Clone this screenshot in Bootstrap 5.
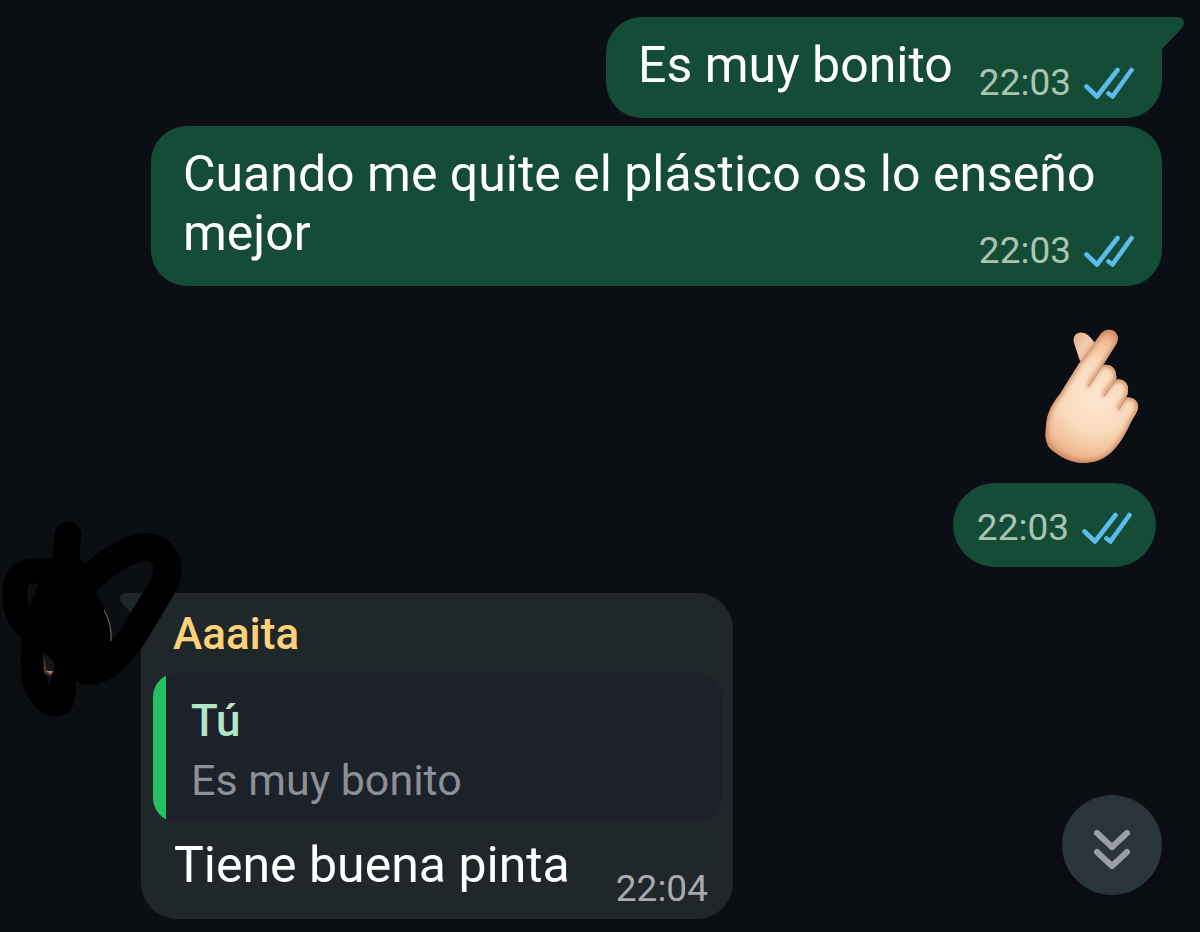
<!DOCTYPE html>
<html lang="es" data-bs-theme="dark">
<head>
<meta charset="utf-8">
<meta name="viewport" content="width=device-width, initial-scale=1">
<title>Chat</title>
<link rel="stylesheet" href="https://cdn.jsdelivr.net/npm/bootstrap@5.3.0/dist/css/bootstrap.min.css">
<style>
body { background: #0b0f13; font-family: Roboto, "Noto Sans", sans-serif; color: #fff; }
.chat { padding: 17px 38px 13px 0; }
.bubble { border-radius: 36px; font-size: 50px; line-height: 59px; }
.bubble-out { background: #154c37; padding: 19px 28px 12px 32px; margin-left: 151px; }
.bubble-in { background: #20272a; padding: 15px 11px 7px 12px; }
.bubble-text { padding-bottom: 11px; }
.meta { font-size: 37px; line-height: 46px; color: #a9c4b3; gap: 13px; }
.meta-gap { gap: 26px; }
.stacked > * { grid-area: 1 / 1; }
.only-meta { padding: 22px 24px 16px; margin-right: 6px; border-radius: 42px; }
.ticks { width: 50px; height: 34px; }
.tail { position: absolute; top: 0; }
.tail-out { left: calc(100% - 40px); }
.tail-in { right: calc(100% - 40px); }
.emoji { width: 104px; height: 142px; margin: 39px 18px 16px 0; }
.incoming { margin-top: 26px; }
.avatar-col { width: 141px; }
.scribble { position: absolute; left: 0; top: -78px; pointer-events: none; z-index: 2; }
.sender { font-size: 44px; line-height: 52px; color: #ffd279; padding-left: 20px; margin-bottom: 13px; }
.sender, .quote-name { font-weight: 500; }
.quote { background: #1d222a; border-radius: 24px; overflow: hidden; color: #8d9094; font-size: 43px; line-height: 51px; }
.quote-bar { width: 13px; background: #25c063; }
.quote-body { padding: 22px 25px 16px; }
.quote-name { font-size: 44px; line-height: 52px; color: #b1e6c9; margin-bottom: 8px; }
.reply { padding: 14px 14px 0 21px; gap: 46px; }
.reply .bubble-text { padding-bottom: 17px; }
.reply .meta { color: #a8aaab; }
.jump { width: 100px; height: 100px; right: 38px; bottom: 37px; background: #29343c; box-shadow: 0 2px 6px #0006; }
</style>
</head>
<body>
<svg class="d-none" aria-hidden="true">
  <symbol id="ticks" viewBox="0 0 50 34">
    <g fill="none" stroke="#5bbcf0" stroke-width="4.6" stroke-linecap="round" stroke-linejoin="round">
      <path d="M2.5 20.5L13 30.500L33.500 4"/><path d="M24.500 27.500L28.500 30.500L47.500 4"/>
    </g>
  </symbol>
</svg>

<main class="chat d-flex flex-column">
  <div class="bubble bubble-out meta-gap position-relative align-self-end d-flex align-items-end">
    <svg class="tail tail-out" width="64" height="60" aria-hidden="true"><path fill="#154c37" d="M0 0H56Q62 0 62 6Q62 8 60 11L40 32V42L0 36Z"/></svg>
    <div class="bubble-text position-relative">Es muy bonito</div>
    <div class="meta d-flex align-items-center position-relative"><time>22:03</time><svg class="ticks" role="img" aria-label="Leído"><use href="#ticks"/></svg></div>
  </div>

  <div class="bubble bubble-out stacked align-self-end d-grid mt-2">
    <div class="bubble-text">Cuando me quite el plástico os lo enseño mejor</div>
    <div class="meta d-flex align-items-center align-self-end ms-auto"><time>22:03</time><svg class="ticks" role="img" aria-label="Leído"><use href="#ticks"/></svg></div>
  </div>

  <svg class="emoji align-self-end" viewBox="1040 325 104 142" role="img" aria-label="Corazón con los dedos">
    <defs>
      <radialGradient id="palm" gradientUnits="userSpaceOnUse" cx="1096" cy="398" r="72"><stop offset="0" stop-color="#fde7d0"/><stop offset=".5" stop-color="#f9d9bc"/><stop offset=".8" stop-color="#efbc94"/><stop offset="1" stop-color="#d99367"/></radialGradient>
      <linearGradient id="thumb" x1="0" y1="0" x2="1" y2="1"><stop offset="0" stop-color="#e3aa88"/><stop offset=".5" stop-color="#f3cdb1"/><stop offset="1" stop-color="#d29672"/></linearGradient>
      <filter id="soft" x="-20%" y="-20%" width="140%" height="140%"><feGaussianBlur stdDeviation="2"/></filter>
      <clipPath id="hand"><path d="M1080 362L1100 335C1104 329 1112 328 1116 333C1119 337 1118 342 1115 346L1103 365C1109 364 1116 367 1116 375C1117 378 1116 379 1116 380C1123 378 1129 383 1128 391C1128 393 1127 396 1126 398C1132 396 1139 401 1138 408C1137 413 1133 418 1130 424C1122 441 1111 459 1092 462C1077 465 1065 460 1053 451C1045 445 1045 436 1046 427C1047 411 1053 403 1060 394Z"/></clipPath>
    </defs>
    <path fill="url(#thumb)" d="M1080 361L1074 343C1072 335 1078 331 1084 333C1088 334 1092 339 1095 343L1089 356Z"/>
    <g clip-path="url(#hand)">
      <path fill="url(#palm)" d="M1040 325H1144V467H1040Z"/>
      <g fill="none" stroke="#c9825b" filter="url(#soft)">
        <path stroke-width="4" d="M1080 362L1100 335C1104 329 1112 328 1116 333C1119 337 1118 342 1115 346L1103 365C1109 364 1116 367 1116 375C1117 378 1116 379 1116 380C1123 378 1129 383 1128 391C1128 393 1127 396 1126 398C1132 396 1139 401 1138 408C1137 413 1133 418 1130 424C1122 441 1111 459 1092 462C1077 465 1065 460 1053 451C1045 445 1045 436 1046 427C1047 411 1053 403 1060 394Z"/>
        <path stroke-width="3" d="M1104 364Q1094 373 1088 387M1116 379Q1109 385 1103 396M1126 397Q1121 402 1118 410"/>
      </g>
      <path fill="none" stroke="#c98a66" stroke-width="1" stroke-linecap="round" d="M1103 365L1088 387M1116 380L1104 396M1126 398L1119 409"/>
    </g>
  </svg>

  <div class="bubble bubble-out only-meta align-self-end">
    <div class="meta d-flex align-items-center"><time>22:03</time><svg class="ticks" role="img" aria-label="Leído"><use href="#ticks"/></svg></div>
  </div>

  <div class="incoming d-flex align-items-start">
    <div class="avatar-col flex-shrink-0 position-relative align-self-start">
      <svg class="scribble" width="190" height="210" viewBox="0 515 190 210" role="img" aria-label="Avatar tachado">
        <g fill="none" stroke="#000" stroke-linecap="round" stroke-linejoin="round">
          <path stroke-width="27" d="M68 535Q65 560 66 590"/>
          <path stroke-width="25" d="M62 571H34C20 571 15 580 15 592C14 612 20 622 38 636"/>
          <path stroke-width="25" d="M34 635C33 650 33 668 34 678C38 697 52 708 60 703C66 695 62 680 62 668"/>
          <path stroke-width="28" d="M80 586C102 567 127 546 149 547C163 549 171 563 166 579C157 598 145 615 134 634C119 657 102 672 86 671"/>
        </g>
        <path d="M56 560H82L92 590C103 600 111 618 111 641V660L86 685L54 668C48 663 44 655 42 651L26 628C28 610 33 593 40 583Z"/>
        <path fill="none" stroke="#82716b" stroke-width="1" d="M104 610Q112 624 111 641"/>
        <path fill="#161518" d="M43 651L44 672L50 680L54 673V662Z"/>
        <path fill="#46342d" d="M43 655L47 670L53 672L50 676L44 673Z"/><path fill="#b58464" d="M46 671L53 671L51 674Z"/>
      </svg>
    </div>
    <article class="bubble bubble-in position-relative">
      <svg class="tail tail-in" width="62" height="60" aria-hidden="true"><path fill="#20272a" d="M62 0H6Q1 1 1 6Q1 8 3 10L22 31V42L62 36Z"/></svg>
      <div class="sender position-relative">Aaaita</div>
      <blockquote class="quote d-flex m-0">
        <div class="quote-bar flex-shrink-0"></div>
        <div class="quote-body"><div class="quote-name">Tú</div><div>Es muy bonito</div></div>
      </blockquote>
      <div class="reply d-flex align-items-end">
        <div class="bubble-text">Tiene buena pinta</div>
        <div class="meta"><time>22:04</time></div>
      </div>
    </article>
  </div>
</main>

<button type="button" class="jump btn position-fixed rounded-circle border-0 p-0 pt-2 d-flex align-items-center justify-content-center" aria-label="Ir al final">
  <svg width="40" height="44" viewBox="0 0 40 44" fill="none" stroke="#9b9fa5" stroke-width="6" stroke-linecap="round" stroke-linejoin="round"><path d="M5 6L20 20L35 6M5 25L20 39L35 25"/></svg>
</button>
<script src="https://cdn.jsdelivr.net/npm/bootstrap@5.3.0/dist/js/bootstrap.bundle.min.js"></script>
</body>
</html>
